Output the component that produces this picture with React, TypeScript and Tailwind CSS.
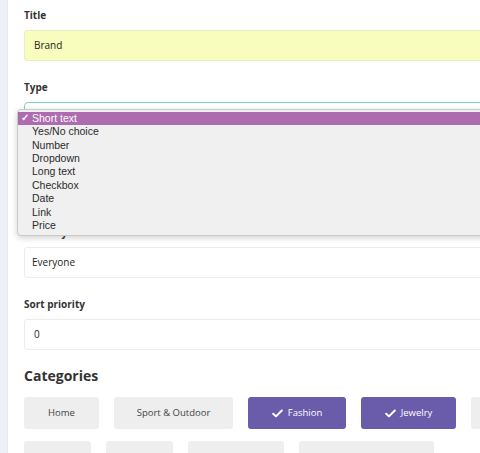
import React from 'react';

const typeOptions = [
  'Short text',
  'Yes/No choice',
  'Number',
  'Dropdown',
  'Long text',
  'Checkbox',
  'Date',
  'Link',
  'Price',
];

const categories = [
  { label: 'Home', width: 'w-[75px]', active: false },
  { label: 'Sport & Outdoor', width: 'w-[119px]', active: false },
  { label: 'Fashion', width: 'w-[98px]', active: true },
  { label: 'Jewelry', width: 'w-[95px]', active: true },
];

const moreCategories = ['w-[67px]', 'w-[67px]', 'w-[96px]', 'w-[135px]'];

function Check({ className }: { className?: string }) {
  return (
    <svg viewBox="0 0 12 10" className={className} fill="none">
      <path d="M1.2 5.2 4.3 8.2 10.8 1.6" stroke="currentColor" strokeWidth="2.2" strokeLinecap="round" strokeLinejoin="round" />
    </svg>
  );
}

function Label({ children }: { children: React.ReactNode }) {
  return <div className="text-[10px] leading-[14px] font-bold text-[#333] mb-2">{children}</div>;
}

export default function App() {
  return (
    <div className="relative flex w-[480px] h-[453px] overflow-hidden bg-white" style={{ fontFamily: '"Open Sans", sans-serif' }}>
      <div className="w-2 shrink-0 bg-[#eef0f7] border-r border-[#e6e8ef]" />
      <div className="pl-4 pt-2 shrink-0 w-[600px]">
        <Label>Title</Label>
        <div className="h-[31px] mb-[19px] w-[560px] rounded-[3px] border border-[#e8edc4] bg-[#f8fcbc] flex items-center pl-[9px] text-[10px] text-[#222]">
          Brand
        </div>

        <Label>Type</Label>
        <div className="h-[31px] mb-[92px] w-[560px] rounded-[4px] border border-[#7fd6b7] bg-white" />

        <Label>Visibility</Label>
        <div className="h-[31px] mb-[19px] w-[560px] rounded-[3px] border border-[#ececec] bg-white flex items-center pl-[7px] text-[10px] text-[#222]">
          Everyone
        </div>

        <Label>Sort priority</Label>
        <div className="h-[31px] mb-[16px] w-[560px] rounded-[3px] border border-[#ececec] bg-white flex items-center pl-[9px] text-[10px] text-[#222]">
          0
        </div>

        <div className="text-[14px] leading-5 font-bold text-[#333] mb-[11px]">Categories</div>
        <div className="flex gap-[15px] mb-3">
          {categories.map((c) => (
            <div
              key={c.label}
              className={`${c.width} h-[32px] shrink-0 rounded-[3px] flex items-center justify-center gap-[5px] text-[9.5px] ${
                c.active ? 'bg-[#6a5cab] text-white' : 'bg-[#eeeeee] text-[#444]'
              }`}
            >
              {c.active && <Check className="w-[11px] h-[9px]" />}
              {c.label}
            </div>
          ))}
          <div className="w-[80px] h-[32px] shrink-0 rounded-[3px] bg-[#eeeeee]" />
        </div>
        <div className="flex gap-[15px]">
          {moreCategories.map((w, i) => (
            <div key={i} className={`${w} h-[32px] shrink-0 rounded-[3px] bg-[#eeeeee]`} />
          ))}
        </div>
      </div>

      <div
        className="absolute left-[17px] top-[109px] w-[500px] rounded-[4px] border border-[#c9c9c9] bg-[#f0f0f0] pt-[1.5px] pb-[3px] shadow-[0_2px_6px_rgba(0,0,0,0.18)] text-[10.5px] text-[#2b2b2b]"
        style={{ fontFamily: '"Liberation Sans", Arial, sans-serif' }}
      >
        {typeOptions.map((o, i) => (
          <div
            key={o}
            className={`h-[13.375px] flex items-center leading-none relative pl-[14px] ${
              i === 0 ? 'bg-[#ad6bb0] text-white' : ''
            }`}
          >
            {i === 0 && <span className="absolute left-[3px] text-[10px] font-bold">✓</span>}
            {o}
          </div>
        ))}
      </div>
    </div>
  );
}
